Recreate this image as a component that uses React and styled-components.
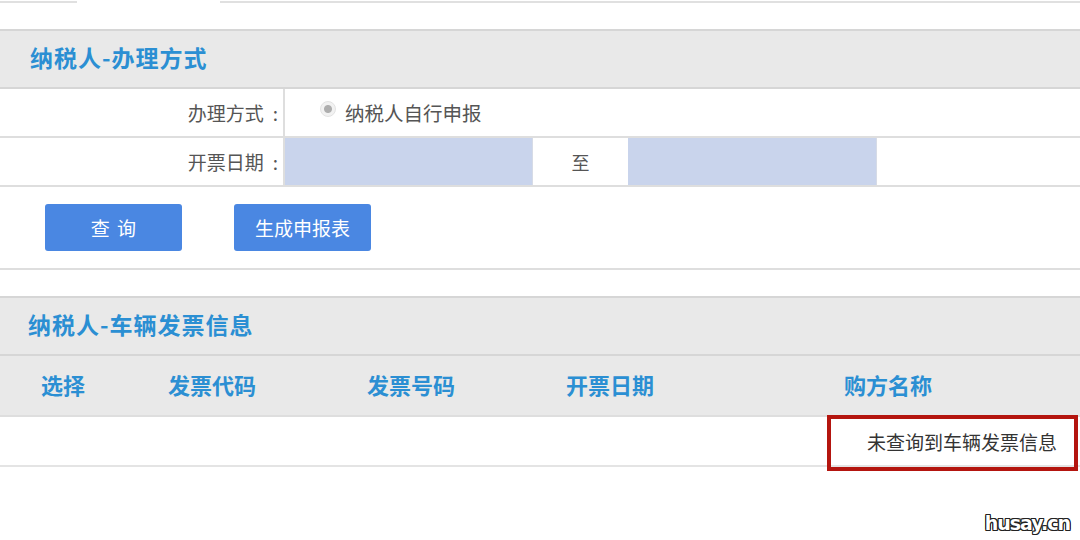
import styled, { createGlobalStyle } from "styled-components"

const GlobalStyle = createGlobalStyle`
  body {
    margin: 0;
    background: #fff;
    font-family: "Noto Sans CJK SC", "Noto Sans", sans-serif;
  }
`

const Page = styled.div`
  position: relative;
  width: 1080px;
  height: 540px;
  overflow: hidden;
  background: #fff;
`
const TabStrip = styled.div`
  display: flex;
  height: 3px;
`
const TabEdge = styled.div`
  width: ${(p) => (p.$w ? p.$w + "px" : "auto")};
  flex: ${(p) => (p.$w ? "none" : "1")};
  border-bottom: ${(p) => (p.$open ? "none" : "2px solid #e0e0e0")};
`
const Section = styled.section`
  margin-top: ${(p) => p.$top}px;
`
const SectionHeader = styled.div`
  height: 56px;
  box-sizing: border-box;
  height: 60px;
  display: flex;
  align-items: center;
  padding: 0 0 4px ${(p) => p.$pad}px;
  background: #e9e9e9;
  border-top: 2px solid #d6d6d6;
  border-bottom: 2px solid #d6d6d6;
`
const SectionTitle = styled.h2`
  margin: 0;
  font-size: 23px;
  font-weight: 700;
  color: #2b8fd3;
  letter-spacing: 1px;
`
const FormRow = styled.div`
  display: grid;
  grid-template-columns: ${(p) => p.$cols};
  height: 47px;
  border-bottom: 2px solid #dedede;
`
const LabelCell = styled.div`
  display: flex;
  align-items: center;
  justify-content: flex-end;
  padding-right: 5px;
  border-right: 2px solid #dedede;
  font-size: 19px;
  color: #555;
`
const Colon = styled.span`
  margin-left: 9px;
`
const ValueCell = styled.div`
  display: flex;
  align-items: center;
  justify-content: ${(p) => (p.$center ? "center" : "flex-start")};
  padding-left: ${(p) => (p.$center ? 0 : 35)}px;
  font-size: ${(p) => (p.$center ? 18 : 19.5)}px;
  color: #555;
  background: ${(p) => (p.$input ? "#c9d4ec" : "#fff")};
  border-right: ${(p) => (p.$input ? "1px solid #d6dbe6" : "none")};
`
const Radio = styled.span`
  width: 16px;
  height: 16px;
  margin-right: 9px;
  margin-top: -8px;
  border-radius: 50%;
  background: radial-gradient(circle, #aeaeae 0 3.5px, #f2f2f2 4.5px);
  border: 1px solid #e3e3e3;
  box-sizing: border-box;
`
const ButtonBar = styled.div`
  display: flex;
  gap: 52px;
  padding: 17px 0 0 45px;
  height: 64px;
  border-bottom: 2px solid #dedede;
`
const Button = styled.button`
  width: 137px;
  height: 47px;
  border: none;
  border-radius: 3px;
  background: #4a87e2;
  color: #fff;
  font-family: inherit;
  font-size: 19px;
  word-spacing: 3px;
`
const TableHead = styled.div`
  display: grid;
  grid-template-columns: 126px 172px 226px 172px 1fr;
  height: 59px;
  background: #e9e9e9;
  border-bottom: 2px solid #dedede;
`
const HeadCell = styled.div`
  display: flex;
  align-items: center;
  justify-content: center;
  padding-bottom: 4px;
  font-size: 22px;
  font-weight: 700;
  color: #2b8fd3;
`
const EmptyRow = styled.div`
  position: relative;
  height: 48px;
  display: flex;
  align-items: center;
  justify-content: flex-end;
  padding-right: 23px;
  border-bottom: 2px solid #e4e4e4;
  font-size: 19px;
  color: #333;
`
const Highlight = styled.div`
  position: absolute;
  left: 827px;
  right: 2px;
  top: -2px;
  bottom: -6px;
  border: 4px solid #b4150f;
  pointer-events: none;
`
const Watermark = styled.div`
  position: absolute;
  right: 10px;
  bottom: 6px;
  font-family: "DejaVu Sans", sans-serif;
  font-size: 19px;
  font-weight: 700;
  color: #fff;
  letter-spacing: -1px;
  text-shadow: 1px 0 0 #222, -1px 0 0 #222, 0 1px 0 #222, 0 -1px 0 #222,
    1px 1px 0 #222, -1px -1px 0 #222, 1px -1px 0 #222, -1px 1px 0 #222;
`

const App = () => {
  return (
    <Page>
      <GlobalStyle />
      <TabStrip>
        <TabEdge $w={77} />
        <TabEdge $w={143} $open />
        <TabEdge />
      </TabStrip>

      <Section $top={26}>
        <SectionHeader $pad={30}>
          <SectionTitle>纳税人-办理方式</SectionTitle>
        </SectionHeader>
        <FormRow $cols="285px 1fr">
          <LabelCell>
            办理方式<Colon>:</Colon>
          </LabelCell>
          <ValueCell>
            <Radio />
            纳税人自行申报
          </ValueCell>
        </FormRow>
        <FormRow $cols="285px 248px 95px 249px 1fr">
          <LabelCell>
            开票日期<Colon>:</Colon>
          </LabelCell>
          <ValueCell $input />
          <ValueCell $center>至</ValueCell>
          <ValueCell $input />
          <ValueCell />
        </FormRow>
        <ButtonBar>
          <Button>查 询</Button>
          <Button>生成申报表</Button>
        </ButtonBar>
      </Section>

      <Section $top={26}>
        <SectionHeader $pad={28}>
          <SectionTitle>纳税人-车辆发票信息</SectionTitle>
        </SectionHeader>
        <TableHead>
          <HeadCell>选择</HeadCell>
          <HeadCell>发票代码</HeadCell>
          <HeadCell>发票号码</HeadCell>
          <HeadCell>开票日期</HeadCell>
          <HeadCell>购方名称</HeadCell>
        </TableHead>
        <EmptyRow>
          未查询到车辆发票信息
          <Highlight />
        </EmptyRow>
      </Section>

      <Watermark>husay.cn</Watermark>
    </Page>
  )
}

export default App
